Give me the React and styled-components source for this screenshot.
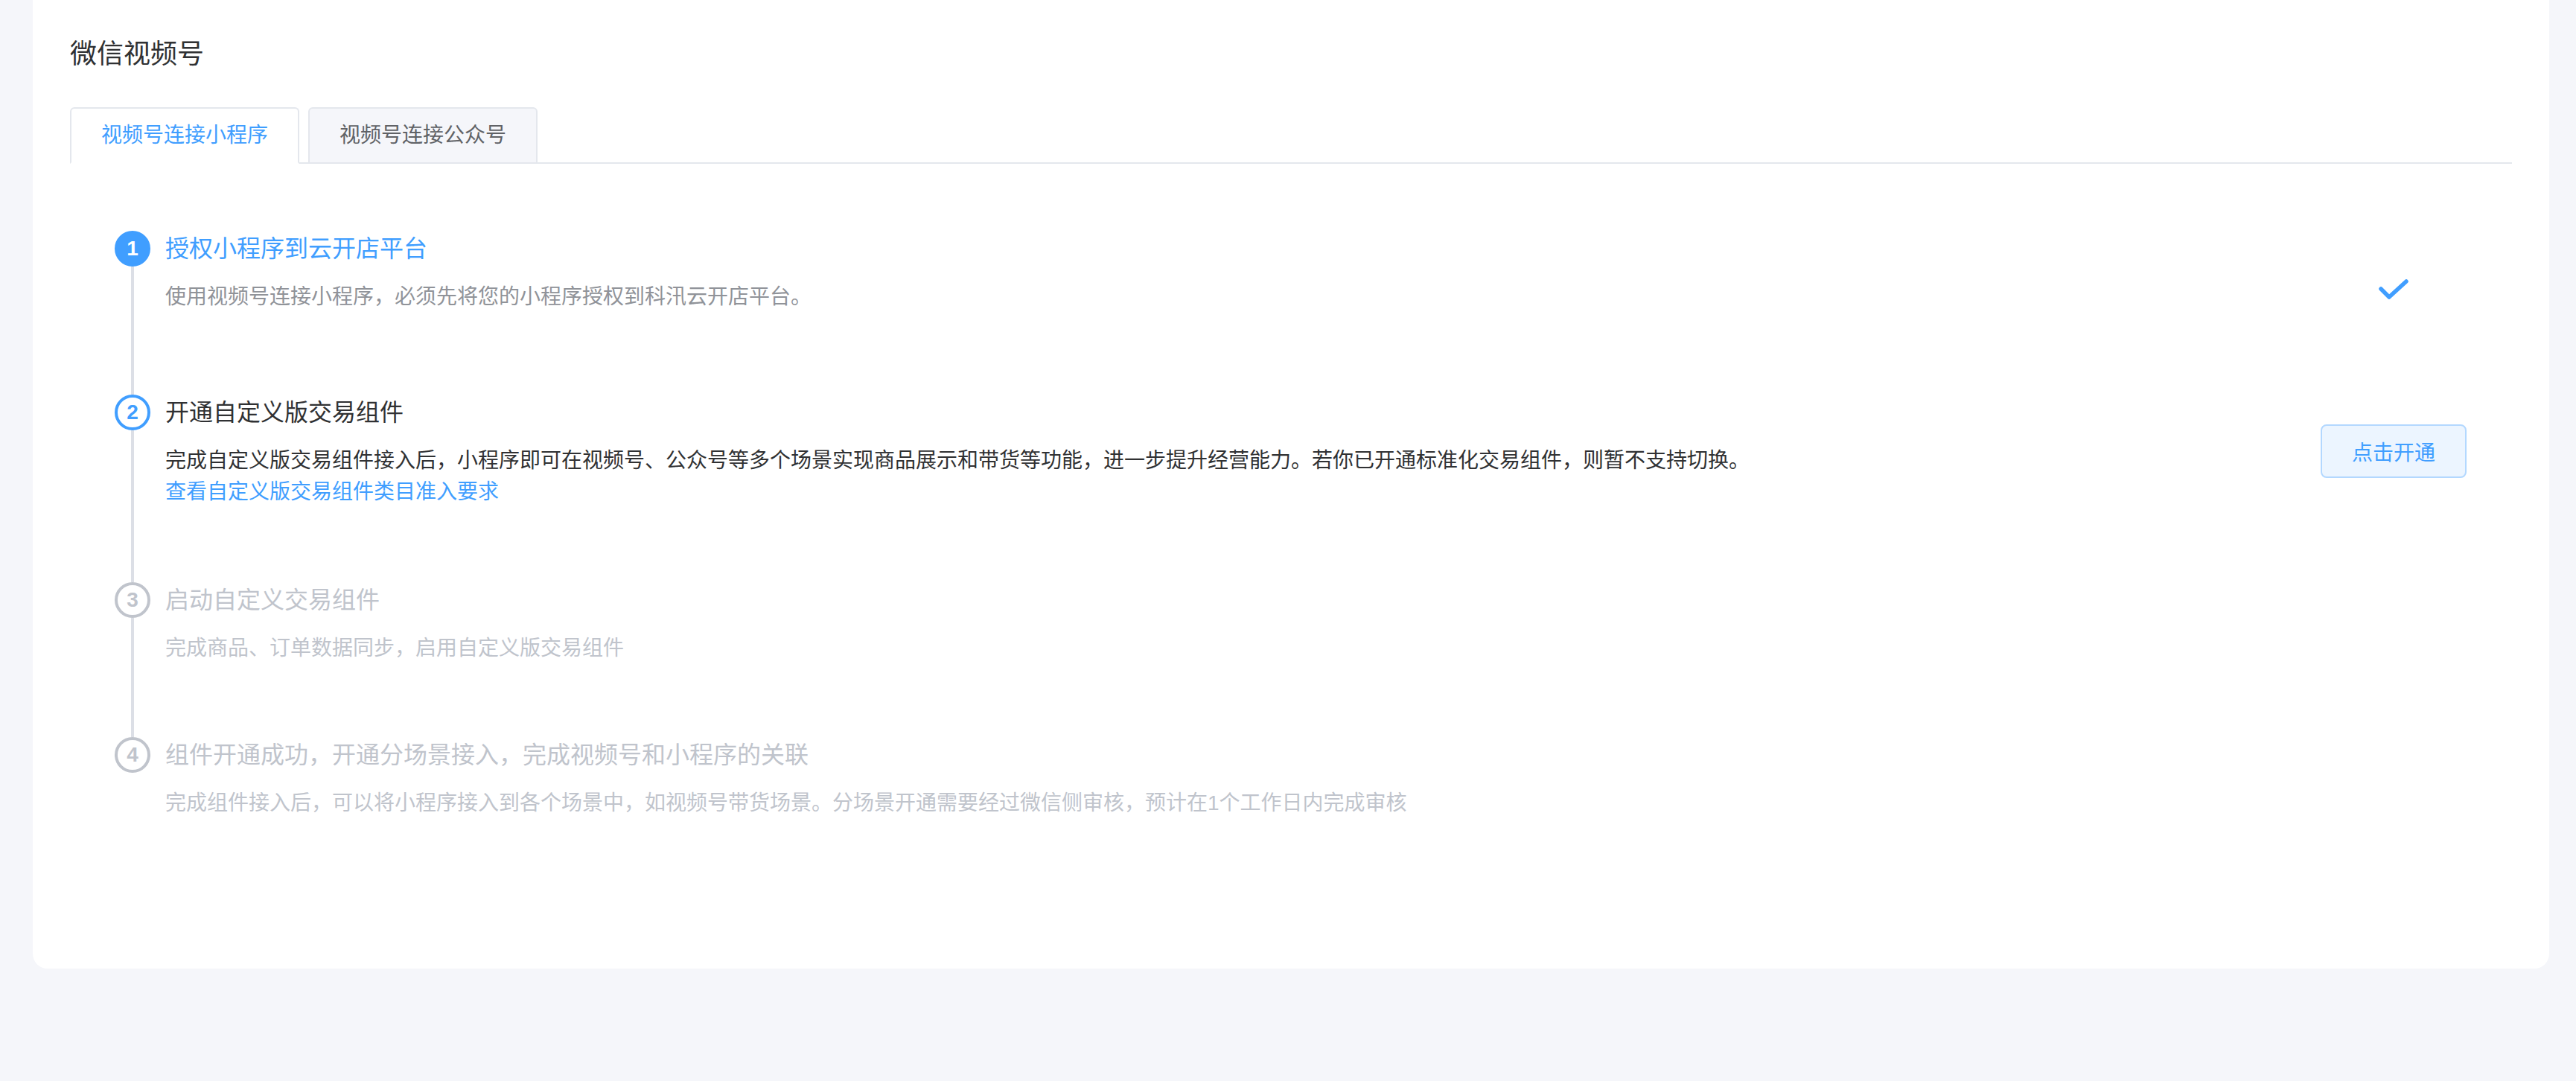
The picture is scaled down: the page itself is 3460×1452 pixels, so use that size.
import React from 'react';
import styled, { createGlobalStyle } from 'styled-components';

const GlobalStyle = createGlobalStyle`
  html, body {
    margin: 0;
    padding: 0;
    background: #f5f6fa;
  }
  body {
    font-family: "Liberation Sans", "Noto Sans CJK SC", sans-serif;
    min-height: 100vh;
  }
`;

const Page = styled.div`
  padding: 0 36px 0 44px;
`;

const Card = styled.div`
  background: #fff;
  border-radius: 0 0 20px 20px;
  padding: 48px 50px 201px 50px;
`;

const Title = styled.h3`
  margin: 0;
  font-size: 36px;
  line-height: 50px;
  font-weight: 400;
  color: #303133;
`;

const TabBar = styled.div`
  display: flex;
  gap: 12px;
  margin-top: 46px;
  border-bottom: 2px solid #e4e7ed;
`;

const Tab = styled.div`
  height: 72px;
  line-height: 72px;
  padding: 0 40px;
  font-size: 28px;
  border: 2px solid #e4e7ed;
  border-bottom-color: ${p => (p.$active ? '#fff' : '#e4e7ed')};
  border-radius: 6px 6px 0 0;
  margin-bottom: -2px;
  background: ${p => (p.$active ? '#fff' : '#f5f6fa')};
  color: ${p => (p.$active ? '#409eff' : '#606266')};
  cursor: pointer;
`;

const Steps = styled.div`
  margin-top: 90px;
  padding: 0 61px 0 60px;
`;

const Step = styled.div`
  display: grid;
  grid-template-columns: 48px 1fr 196px;
  column-gap: 20px;
`;

const Aside = styled.div`
  display: flex;
  flex-direction: column;
  align-items: center;
`;

const tone = {
  done: { bg: '#409eff', border: '#409eff', num: '#fff', title: '#409eff', desc: '#909399' },
  active: { bg: '#fff', border: '#409eff', num: '#409eff', title: '#303133', desc: '#303133' },
  wait: { bg: '#fff', border: '#c0c4cc', num: '#c0c4cc', title: '#c0c4cc', desc: '#c0c4cc' },
};

const Circle = styled.div`
  box-sizing: border-box;
  width: 48px;
  height: 48px;
  flex: none;
  border-radius: 50%;
  border: 4px solid ${p => tone[p.$status].border};
  background: ${p => tone[p.$status].bg};
  color: ${p => tone[p.$status].num};
  display: flex;
  align-items: center;
  justify-content: center;
  font-size: 28px;
  font-weight: 700;
`;

const Line = styled.div`
  flex: 1;
  width: 4px;
  background: #dcdfe6;
`;

const Content = styled.div`
  padding-bottom: ${p => p.$pb}px;
`;

const StepTitle = styled.div`
  font-size: 32px;
  line-height: 48px;
  color: ${p => tone[p.$status].title};
`;

const Desc = styled.div`
  margin-top: 20px;
  font-size: 28px;
  line-height: 42px;
  color: ${p => tone[p.$status].desc};
`;

const Link = styled.a`
  display: block;
  color: #409eff;
  text-decoration: none;
  cursor: pointer;
`;

const Action = styled.div`
  display: flex;
  justify-content: center;
  align-items: flex-start;
  padding-top: ${p => p.$top}px;
`;

const OpenButton = styled.button`
  box-sizing: border-box;
  width: 196px;
  height: 72px;
  border: 2px solid #b3d8ff;
  border-radius: 8px;
  background: #ecf5ff;
  color: #409eff;
  font-family: inherit;
  font-size: 28px;
  cursor: pointer;
`;

const CheckIcon = () => (
  <svg width="40" height="28" viewBox="0 0 40 28">
    <polyline
      points="3,13 14,24 37,3"
      fill="none"
      stroke="#409eff"
      strokeWidth="5.5"
      strokeLinecap="round"
      strokeLinejoin="round"
    />
  </svg>
);

const steps = [
  {
    status: 'done',
    title: '授权小程序到云开店平台',
    desc: '使用视频号连接小程序，必须先将您的小程序授权到科汛云开店平台。',
    pb: 110,
    action: 'check',
    top: 65,
  },
  {
    status: 'active',
    title: '开通自定义版交易组件',
    desc: '完成自定义版交易组件接入后，小程序即可在视频号、公众号等多个场景实现商品展示和带货等功能，进一步提升经营能力。若你已开通标准化交易组件，则暂不支持切换。',
    link: '查看自定义版交易组件类目准入要求',
    pb: 100,
    action: 'button',
    top: 40,
  },
  {
    status: 'wait',
    title: '启动自定义交易组件',
    desc: '完成商品、订单数据同步，启用自定义版交易组件',
    pb: 98,
  },
  {
    status: 'wait',
    title: '组件开通成功，开通分场景接入，完成视频号和小程序的关联',
    desc: '完成组件接入后，可以将小程序接入到各个场景中，如视频号带货场景。分场景开通需要经过微信侧审核，预计在1个工作日内完成审核',
    pb: 0,
  },
];

const App = () => {
  return (
    <Page>
      <GlobalStyle />
      <Card>
        <Title>微信视频号</Title>
        <TabBar>
          <Tab $active>视频号连接小程序</Tab>
          <Tab>视频号连接公众号</Tab>
        </TabBar>
        <Steps>
          {steps.map((s, i) => (
            <Step key={i}>
              <Aside>
                <Circle $status={s.status}>{i + 1}</Circle>
                {i < steps.length - 1 && <Line />}
              </Aside>
              <Content $pb={s.pb}>
                <StepTitle $status={s.status}>{s.title}</StepTitle>
                <Desc $status={s.status}>
                  {s.desc}
                  {s.link && <Link>{s.link}</Link>}
                </Desc>
              </Content>
              <Action $top={s.top || 0}>
                {s.action === 'check' && <CheckIcon />}
                {s.action === 'button' && <OpenButton>点击开通</OpenButton>}
              </Action>
            </Step>
          ))}
        </Steps>
      </Card>
    </Page>
  );
};

export default App;
